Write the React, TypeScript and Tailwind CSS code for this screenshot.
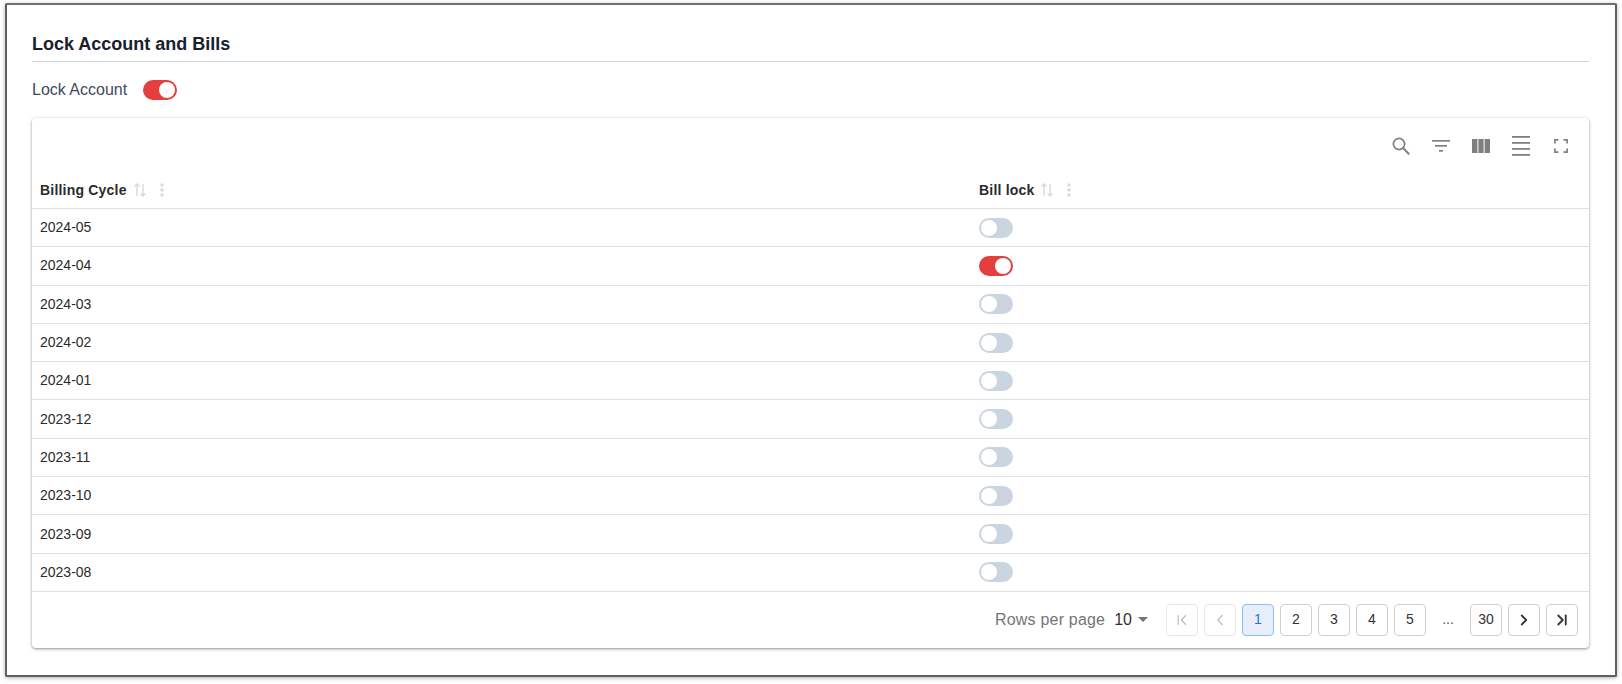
import { ChevronLeft, ChevronRight, ChevronFirst, ChevronLast } from 'lucide-react';

const rows = [
  { cycle: '2024-05', locked: false },
  { cycle: '2024-04', locked: true },
  { cycle: '2024-03', locked: false },
  { cycle: '2024-02', locked: false },
  { cycle: '2024-01', locked: false },
  { cycle: '2023-12', locked: false },
  { cycle: '2023-11', locked: false },
  { cycle: '2023-10', locked: false },
  { cycle: '2023-09', locked: false },
  { cycle: '2023-08', locked: false },
];

function Toggle({ on }: { on: boolean }) {
  return (
    <div
      className={`flex h-5 w-[34px] items-center rounded-full border-2 ${
        on ? 'justify-end border-[#e53e3e] bg-[#e53e3e]' : 'justify-start border-[#cbd5e0] bg-[#cbd5e0]'
      }`}
    >
      <div className="h-4 w-4 rounded-full bg-white" />
    </div>
  );
}

function SortIcon() {
  return (
    <svg width="14" height="16" viewBox="0 0 14 16" fill="none" stroke="#d9d9d9" strokeWidth="1.4">
      <path d="M4 14V2M1.5 4.5 4 2l2.5 2.5" />
      <path d="M10 2v12M7.5 11.5 10 14l2.5-2.5" />
    </svg>
  );
}

function DotsIcon() {
  return (
    <svg width="4" height="16" viewBox="0 0 4 16" fill="#d9d9d9">
      <circle cx="2" cy="3" r="1.7" />
      <circle cx="2" cy="8" r="1.7" />
      <circle cx="2" cy="13" r="1.7" />
    </svg>
  );
}

function HeaderCell({ label, className }: { label: string; className: string }) {
  return (
    <div className={`flex items-center pl-2 ${className}`}>
      <span className="text-[14px] font-bold tracking-[0.2px] text-[#2b2b2b]">{label}</span>
      <span className="ml-[6px]"><SortIcon /></span>
      <span className="ml-[13px]"><DotsIcon /></span>
    </div>
  );
}

function PageButton({ children, active, disabled }: { children: React.ReactNode; active?: boolean; disabled?: boolean }) {
  return (
    <div
      className={`flex h-8 w-8 items-center justify-center rounded border text-[14px] ${
        active
          ? 'border-[#90bdf0] bg-[#e6eff9] text-[#1f74d0]'
          : disabled
            ? 'border-[#e8e8e8] text-[#bdbdbd]'
            : 'border-[#cfcfcf] text-[#333333]'
      }`}
    >
      {children}
    </div>
  );
}

function Toolbar() {
  return (
    <div className="flex h-[54px] items-center justify-end gap-[22px] pr-[21px] pt-[2px]">
      <svg width="18" height="18" viewBox="0 0 18 18" fill="none" stroke="#808080" strokeWidth="1.7">
        <circle cx="7" cy="7" r="5.6" />
        <path d="m11 11 6.2 6.2" strokeWidth="2" />
      </svg>
      <svg width="18" height="12" viewBox="0 0 18 12" fill="#808080">
        <rect x="0" y="0" width="18" height="1.7" />
        <rect x="3" y="5" width="12" height="1.7" />
        <rect x="7" y="10" width="4" height="1.7" />
      </svg>
      <svg width="18" height="14" viewBox="0 0 18 14" fill="#808080">
        <rect x="0" y="0" width="5.4" height="14" />
        <rect x="6.4" y="0" width="5.2" height="14" />
        <rect x="12.6" y="0" width="5.4" height="14" />
      </svg>
      <svg width="18" height="20" viewBox="0 0 18 20" fill="#808080">
        <rect x="0" y="0" width="18" height="1.8" />
        <rect x="0" y="6" width="18" height="1.8" />
        <rect x="0" y="12" width="18" height="1.8" />
        <rect x="0" y="18" width="18" height="1.8" />
      </svg>
      <svg className="ml-[2px]" width="14" height="14" viewBox="0 0 14 14" fill="none" stroke="#808080" strokeWidth="1.7">
        <path d="M.9 4.5V.9h3.6M9.5.9h3.6v3.6M13.1 9.5v3.6H9.5M4.5 13.1H.9V9.5" />
      </svg>
    </div>
  );
}

export default function App() {
  return (
    <div className="h-[684px] w-[1622px] bg-white pl-[5px] pr-[5px] pt-[3px] font-['Liberation_Sans',sans-serif]">
      <div className="h-[674px] rounded-[2px] border-2 border-[#5f5f5f] border-t-[#707070] bg-white pl-[25px] pr-[26px] pt-[25px] shadow-[0_1px_4px_rgba(0,0,0,0.3)]">
        <h2 className="border-b border-[#cbd5e0] pb-[3px] text-[18px] font-bold leading-[28px] text-[#1a202c]">
          Lock Account and Bills
        </h2>

        <div className="mt-[18px] flex h-5 items-center">
          <span className="text-[16px] text-[#3f4a5c]">Lock Account</span>
          <div className="ml-[16px]"><Toggle on /></div>
        </div>

        <div className="mt-[18px] rounded shadow-[0_1px_3px_rgba(0,0,0,0.45)]">
          <Toolbar />
          <div className="flex h-[37px] items-center border-b border-[#e0e0e0]">
            <HeaderCell label="Billing Cycle" className="w-[939px]" />
            <HeaderCell label="Bill lock" className="" />
          </div>

          {rows.map((row) => (
            <div key={row.cycle} className="flex h-[38.3px] items-center border-b border-[#e0e0e0] text-[14px] text-[#2b2b2b]">
              <div className="w-[939px] pl-2">{row.cycle}</div>
              <div className="pl-2"><Toggle on={row.locked} /></div>
            </div>
          ))}

          <div className="flex h-[56px] items-center justify-end pr-[11px]">
            <span className="text-[16px] tracking-[0.2px] text-[#757575]">Rows per page</span>
            <span className="ml-[9px] text-[16px] text-[#333333]">10</span>
            <span className="ml-[6px] mr-[18px] h-0 w-0 border-x-[5px] border-t-[5px] border-x-transparent border-t-[#757575]" />
            <div className="flex items-center gap-[6px]">
              <PageButton disabled><ChevronFirst size={18} strokeWidth={1.6} color="#bdbdbd" /></PageButton>
              <PageButton disabled><ChevronLeft size={18} strokeWidth={1.6} color="#bdbdbd" /></PageButton>
              <PageButton active>1</PageButton>
              <PageButton>2</PageButton>
              <PageButton>3</PageButton>
              <PageButton>4</PageButton>
              <PageButton>5</PageButton>
              <div className="flex h-8 w-8 items-center justify-center text-[14px] text-[#555555]">...</div>
              <PageButton>30</PageButton>
              <PageButton><ChevronRight size={18} strokeWidth={2.4} color="#333333" /></PageButton>
              <PageButton><ChevronLast size={18} strokeWidth={2.4} color="#333333" /></PageButton>
            </div>
          </div>
        </div>
      </div>
    </div>
  );
}
